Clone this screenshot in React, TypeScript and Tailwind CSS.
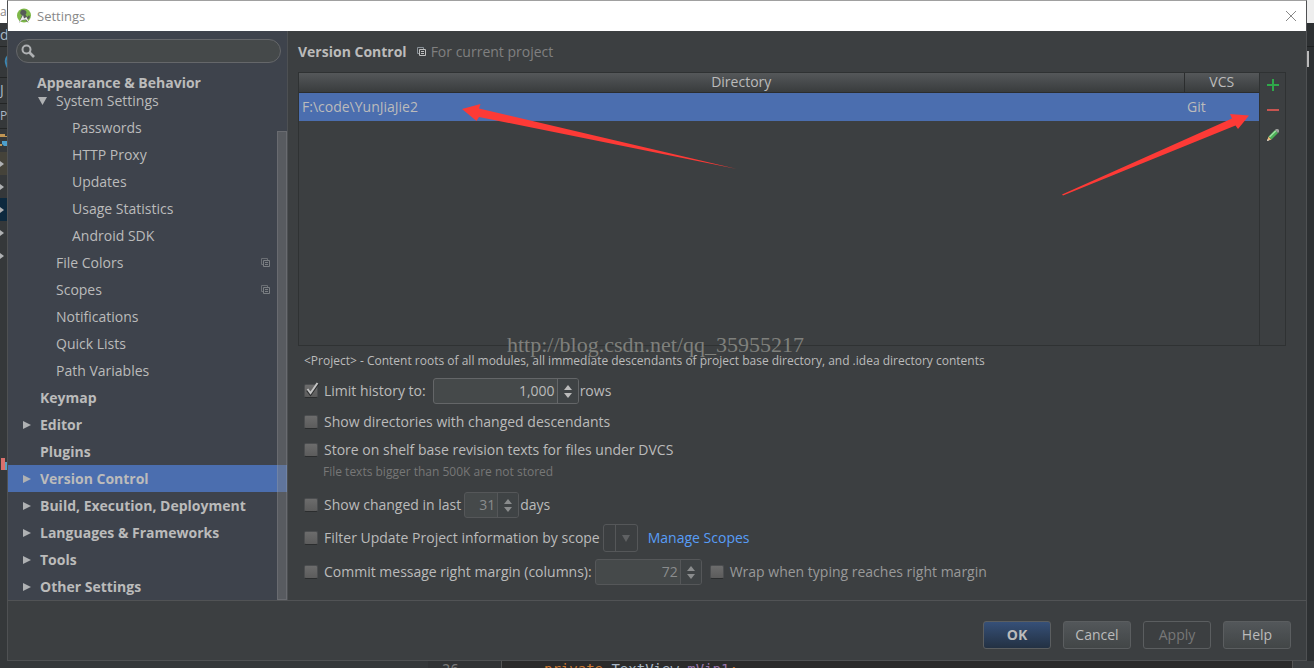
import React from "react";

type Node = { label: string; level: 0 | 1 | 2; arrow?: "right" | "down"; project?: boolean; selected?: boolean };

const nodes: Node[] = [
  { label: "System Settings", level: 1, arrow: "down" },
  { label: "Passwords", level: 2 },
  { label: "HTTP Proxy", level: 2 },
  { label: "Updates", level: 2 },
  { label: "Usage Statistics", level: 2 },
  { label: "Android SDK", level: 2 },
  { label: "File Colors", level: 1, project: true },
  { label: "Scopes", level: 1, project: true },
  { label: "Notifications", level: 1 },
  { label: "Quick Lists", level: 1 },
  { label: "Path Variables", level: 1 },
  { label: "Keymap", level: 0 },
  { label: "Editor", level: 0, arrow: "right" },
  { label: "Plugins", level: 0 },
  { label: "Version Control", level: 0, arrow: "right", selected: true },
  { label: "Build, Execution, Deployment", level: 0, arrow: "right" },
  { label: "Languages & Frameworks", level: 0, arrow: "right" },
  { label: "Tools", level: 0, arrow: "right" },
  { label: "Other Settings", level: 0, arrow: "right" },
];

const levelClass = ["pl-8 font-bold", "pl-12", "pl-16"];

function Triangle({ dir, className }: { dir: "right" | "down"; className: string }) {
  return (
    <svg className={className} width="10" height="10" viewBox="0 0 10 10" fill="#afb1b3" aria-hidden="true">
      <path d={dir === "right" ? "M1 1v8l8-4z" : "M1 1h9L5.500 9z"} />
    </svg>
  );
}

function CopyIcon({ back, front, bg }: { back: string; front: string; bg: string }) {
  return (
    <svg width="10" height="10" viewBox="0 0 10 10" aria-hidden="true">
      <path d="M0.500 0.500h6v6h-6z" fill="none" stroke={back} />
      <path d="M2.500 2.500h6v6h-6z" fill={bg} stroke={front} />
      <path d="M4 4.500h3M4 6.500h3" stroke={front} />
    </svg>
  );
}

function Sidebar() {
  return (
    <nav className="relative flex w-[280px] shrink-0 flex-col border-r border-[#4d5053] bg-[#3e434c] pt-2">
      <label className="mx-2 mr-[6px] flex h-6 shrink-0 items-center rounded-full border border-[#65676a] bg-[#45494a] pl-1">
        <span className="sr-only">Search settings</span>
        <svg width="14" height="14" viewBox="0 0 14 14" fill="none" stroke="#afb1b3" strokeWidth="2" aria-hidden="true">
          <circle cx="5.500" cy="5.500" r="4" />
          <path d="M8.500 8.500l4.500 4.500" strokeWidth="2.600" />
        </svg>
        <input type="text" className="min-w-0 flex-1 bg-transparent px-1 text-[#bbbbbb] outline-none" />
      </label>
      <h2 className="mt-2 -mb-2 h-6 shrink-0 pl-[29px] text-sm leading-6 font-bold">Appearance &amp; Behavior</h2>
      <ul>
        {nodes.map((n) => (
          <li
            key={n.label}
            className={`relative flex h-[27px] items-center justify-between pr-4 text-sm ${levelClass[n.level]} ${n.selected ? "bg-[#4b6eaf]" : ""}`}
          >
            {n.arrow && (
              <Triangle dir={n.arrow} className={`absolute ${n.level === 0 ? "left-[14px]" : "left-[29px]"}`} />
            )}
            <span>{n.label}</span>
            {n.project && <CopyIcon back="#6b6f74" front="#7b7f83" bg="#3e434c" />}
          </li>
        ))}
      </ul>
      <div className="absolute top-[100px] right-0 bottom-0 w-[10px] border border-white/10 bg-[#7f7f7f]/40" />
    </nav>
  );
}

function Check({ id, checked, disabled, children }: { id: string; checked?: boolean; disabled?: boolean; children: string }) {
  return (
    <div className={`flex items-center ${disabled ? "text-[#999999]" : ""}`}>
      <span className="relative mr-[6px] block h-[14px] w-[14px]">
        <input
          id={id}
          type="checkbox"
          defaultChecked={checked}
          disabled={disabled}
          className="block h-[14px] w-[14px] appearance-none rounded-xs border border-[#4c4e50] border-b-[#2b2d2e] bg-linear-to-b from-[#6c6c6c] to-[#5c5c5c]"
        />
        {checked && (
          <svg className="pointer-events-none absolute -top-[2px] left-0" width="16" height="16" viewBox="0 0 16 16" fill="none" aria-hidden="true">
            <path d="M3.500 8l3 4L14 1.500" stroke="#2c2e2f" strokeWidth="3" />
            <path d="M3.500 7l3 4L13.500 1" stroke="#c4c4c4" strokeWidth="2" />
          </svg>
        )}
      </span>
      <label htmlFor={id}>{children}</label>
    </div>
  );
}

function Spinner({ label, value, width, disabled }: { label: string; value: string; width: string; disabled?: boolean }) {
  const tone = disabled ? "border-[#555759] text-[#8a8c8d]" : "border-[#646668]";
  return (
    <span className={`flex h-[26px] overflow-hidden rounded-[3px] border bg-[#45494a] ${tone} ${width}`}>
      <input
        aria-label={label}
        defaultValue={value}
        disabled={disabled}
        className="min-w-0 flex-1 bg-transparent pr-[2px] text-right outline-none"
      />
      <span className={`flex w-[21px] flex-col items-center justify-center gap-[3px] border-l bg-[#3f4345] ${tone}`}>
        <button type="button" aria-label={`Increase ${label}`} disabled={disabled}>
          <svg className="block" width="8" height="5" viewBox="0 0 8 5" fill={disabled ? "#8a8c8d" : "#bbbbbb"}>
            <path d="M0 5h8L4 0z" />
          </svg>
        </button>
        <button type="button" aria-label={`Decrease ${label}`} disabled={disabled}>
          <svg className="block" width="8" height="5" viewBox="0 0 8 5" fill={disabled ? "#8a8c8d" : "#bbbbbb"}>
            <path d="M0 0h8L4 5z" />
          </svg>
        </button>
      </span>
    </span>
  );
}

function Mappings() {
  return (
    <section className="relative flex h-[274px] border border-[#2f3233]">
      <div className="min-w-0 flex-1">
        <table className="w-full table-fixed border-collapse text-left">
          <thead>
            <tr className="h-[19px] bg-linear-to-b from-[#55585a] to-[#393c3d] leading-[18px]">
              <th className="border-b border-[#2b2d2e] p-0 text-center font-normal">Directory</th>
              <th className="w-[75px] border-b border-l border-[#2b2d2e] p-0 text-center font-normal">VCS</th>
            </tr>
          </thead>
          <tbody>
            <tr className="h-[29px] bg-[#4b6eaf]">
              <td className="p-0 pl-[3px]">F:\code\YunJiaJie2</td>
              <td className="p-0 pl-[3px]">Git</td>
            </tr>
          </tbody>
        </table>
      </div>
      <div className="flex w-[26px] flex-col items-center gap-[13px] border-l border-[#2f3233] pt-[6px]">
        <button type="button" aria-label="Add" className="h-3">
          <svg width="12" height="12" viewBox="0 0 12 12" stroke="#2fa84a" strokeWidth="2"><path d="M6 0v12M0 6h12" /></svg>
        </button>
        <button type="button" aria-label="Remove" className="h-3">
          <svg width="12" height="12" viewBox="0 0 12 12" stroke="#c75450" strokeWidth="2"><path d="M0 6h12" /></svg>
        </button>
        <button type="button" aria-label="Edit" className="h-3">
          <svg width="12" height="12" viewBox="0 0 12 12">
            <path d="M0 12l1.500-4.500 3 3z" fill="#e8b878" />
            <path d="M0 12l0.600-2 1.400 1.400z" fill="#d8d8d8" />
            <path d="M1.500 7.500L8 1l3 3-6.500 6.500z" fill="#4caf57" />
            <path d="M2 7.500L8.300 1.200l1 1L3 8.500z" fill="#9fe0a2" />
            <path d="M8 1l1-1h2l1 1v2l-1 1z" fill="#9a9d9a" />
          </svg>
        </button>
      </div>
      <svg className="pointer-events-none absolute top-[30px] left-[163px]" width="276" height="68" viewBox="0 0 276 68" fill="#fd3a36" aria-hidden="true">
        <path d="M0 6L18.500 1L17 5.500L275 66L17 14L14.500 18z" />
      </svg>
      <svg className="pointer-events-none absolute top-[40px] right-[35px]" width="188" height="84" viewBox="0 0 188 84" fill="#fd3a36" aria-hidden="true">
        <path d="M187 2.500L168 1L170 5.500L0 81.500L1 82.500L173.500 12.500L176 16z" />
      </svg>
      <span className="pointer-events-none absolute -bottom-[14px] left-[208px] font-['Liberation_Serif',serif] text-[22px] leading-7 text-[#7f807c]">
        http://blog.csdn.net/qq_35955217
      </span>
    </section>
  );
}

function DialogButton({ children, variant = "plain" }: { children: string; variant?: "plain" | "primary" | "off" }) {
  const look = {
    plain: "bg-linear-to-b from-[#53575a] to-[#424647]",
    primary: "bg-linear-to-b from-[#365078] to-[#233143] font-bold",
    off: "text-[#777777]",
  }[variant];
  return (
    <button type="button" disabled={variant === "off"} className={`h-7 w-17 rounded-[3px] border border-[#5b5e60] ${look}`}>
      {children}
    </button>
  );
}

function EditorEdgeLeft() {
  return (
    <aside className="flex w-[7px] shrink-0 flex-col overflow-hidden bg-[#35383a] text-[#a9b7c6]" aria-hidden="true">
      <div className="h-[23px] bg-white text-xs leading-6 text-[#888888]">a.</div>
      <div className="h-6 border-b border-[#232525] leading-6">d</div>
      <div className="h-[31px] border-b border-[#232525] pt-2">
        <svg width="7" height="14" viewBox="0 0 7 14" fill="none" stroke="#3d85b0" strokeWidth="2"><path d="M8 1Q5 4 6 8T8 13" /></svg>
      </div>
      <div className="h-[26px] border-b border-[#232525] leading-6">J</div>
      <div className="h-[25px] border-b border-[#232525] text-xs leading-6">P</div>
      <div className="h-[23px] pt-1">
        <svg width="7" height="16" viewBox="0 0 7 16"><path d="M0 1h5v2h2v1H0zM0 11h2v2H0z" fill="#c09553" /><path d="M2 8h5v5H4L2 11z" fill="#4d9fcb" /></svg>
      </div>
      {["bg-[#45433a]", "", "bg-[#0d293e]", "", ""].map((bg, i) => (
        <div key={i} className={`flex h-[23px] items-center ${bg}`}>
          <svg width="4" height="6" viewBox="0 0 4 6" fill="#afb1b3"><path d="M0 0l4 3-4 3z" /></svg>
        </div>
      ))}
      <div className="mt-[190px]">
        <svg width="7" height="14" viewBox="0 0 7 14"><path d="M1 1h4v12H1z" fill="#d9706c" /><path d="M5 5h2v8H5z" fill="#5a9fbf" /></svg>
      </div>
    </aside>
  );
}

function EditorEdgeRight() {
  return (
    <aside className="flex w-[7px] shrink-0 flex-col overflow-hidden bg-[#2d3032]" aria-hidden="true">
      <div className="h-[23px] bg-[#eeeeee]" />
      <div className="h-6 border-b border-[#1f2122]" />
      <div className="mt-1 h-4 w-[2px] bg-[#bbbbbb]" />
    </aside>
  );
}

export default function App() {
  return (
    <div className="flex min-h-screen flex-col bg-[#2b2b2b] font-['Open_Sans',sans-serif] text-sm text-[#bbbbbb]">
      <div className="flex flex-1">
        <EditorEdgeLeft />
        <div className="flex min-w-0 flex-1 flex-col border border-t-[#a0a0a0] border-[#4f5153] bg-[#3c3f41]">
          <header className="flex h-[30px] items-center bg-white pr-[9px] pl-2 text-[13px] text-[#888888]">
            <svg width="16" height="16" viewBox="0 0 16 16" aria-hidden="true">
              <circle cx="8" cy="7.500" r="7" fill="#7eb849" />
              <path d="M8 2a2.500 2.500 0 0 1 1.500 4.500L11 9a4 4 0 0 0 2-2l1 2q-1 2-3 2.500l1.500 3.500-3-3q-2 .500-3.500 0l-3 3L6 7a2.500 2.500 0 0 1 2-5z" fill="#555a58" />
              <path d="M2.500 15.500L7 7l1 3.500L10.500 9l3 6.500-3.500-4-4 .500z" fill="#eeeeee" />
            </svg>
            <h1 className="ml-[5px] flex-1">Settings</h1>
            <button type="button" aria-label="Close">
              <svg width="12" height="12" viewBox="0 0 12 12" stroke="#888888"><path d="M1 1l10 10M11 1L1 11" /></svg>
            </button>
          </header>
          <div className="flex flex-1">
            <Sidebar />
            <main className="min-w-0 flex-1 pr-5 pl-[10px]">
              <div className="flex h-[41px] items-center">
                <h2 className="mr-[10px] font-bold">Version Control</h2>
                <CopyIcon back="#8a9299" front="#c0c0c0" bg="#3c3f41" />
                <span className="ml-1 text-[#808080]">For current project</span>
              </div>
              <Mappings />
              <p className="mt-[6px] pl-[6px] text-xs leading-[18px]">
                &lt;Project&gt; - Content roots of all modules, all immediate descendants of project base directory, and .idea directory contents
              </p>
              <div className="pl-[6px]">
                <div className="mt-2 flex items-center">
                  <Check id="limit" checked>Limit history to:</Check>
                  <span className="ml-[7px] flex"><Spinner label="history rows" value="1,000" width="w-[146px]" /></span>
                  <span className="ml-px">rows</span>
                </div>
                <div className="mt-2"><Check id="changed">Show directories with changed descendants</Check></div>
                <div className="mt-2"><Check id="shelf">Store on shelf base revision texts for files under DVCS</Check></div>
                <p className="mt-[3px] pl-[19px] text-xs leading-[18px] text-[#777777]">File texts bigger than 500K are not stored</p>
                <div className="mt-[11px] flex items-center">
                  <Check id="last">Show changed in last</Check>
                  <span className="ml-[3px] flex"><Spinner label="days" value="31" width="w-[55px]" disabled /></span>
                  <span className="ml-px">days</span>
                </div>
                <div className="mt-[6px] flex items-center">
                  <Check id="filter">Filter Update Project information by scope</Check>
                  <span className="relative ml-[3px] flex h-7 w-[35px] rounded-[3px] border border-[#555759]">
                    <select aria-label="Scope" disabled className="w-full appearance-none bg-transparent" />
                    <span className="pointer-events-none absolute inset-y-0 right-0 flex w-[22px] items-center justify-center border-l border-[#555759]">
                      <svg width="8" height="7" viewBox="0 0 8 7" fill="#5f6163"><path d="M0 0h8L4 7z" /></svg>
                    </span>
                  </span>
                  <a href="#scopes" className="ml-[10px] text-[#589df6]">Manage Scopes</a>
                </div>
                <div className="mt-[7px] flex items-center">
                  <Check id="margin">Commit message right margin (columns):</Check>
                  <span className="mr-2 ml-[3px] flex"><Spinner label="right margin columns" value="72" width="w-[107px]" disabled /></span>
                  <Check id="wrap" disabled>Wrap when typing reaches right margin</Check>
                </div>
              </div>
            </main>
          </div>
          <footer className="flex h-[60px] items-center justify-end gap-3 border-t border-[#515355] pt-2 pr-[15px]">
            <DialogButton variant="primary">OK</DialogButton>
            <DialogButton>Cancel</DialogButton>
            <DialogButton variant="off">Apply</DialogButton>
            <DialogButton>Help</DialogButton>
          </footer>
        </div>
        <EditorEdgeRight />
      </div>
      <div className="flex h-[7px] overflow-hidden font-['DejaVu_Sans_Mono',monospace] text-sm leading-4" aria-hidden="true">
        <div className="w-[428px] bg-[#35383a]" />
        <div className="w-[74px] border-r border-[#555555] bg-[#313335] pl-[14px] text-[#787878]">26</div>
        <div className="flex-1 pl-[42px] text-[#a9b7c6]">
          <span className="text-[#cc7832]">private</span> TextView <span className="text-[#9876aa]">mVip1</span>
          <span className="text-[#cc7832]">;</span>
        </div>
        <div className="w-[22px] border-l border-[#555555] bg-[#3c3f41]" />
      </div>
    </div>
  );
}
